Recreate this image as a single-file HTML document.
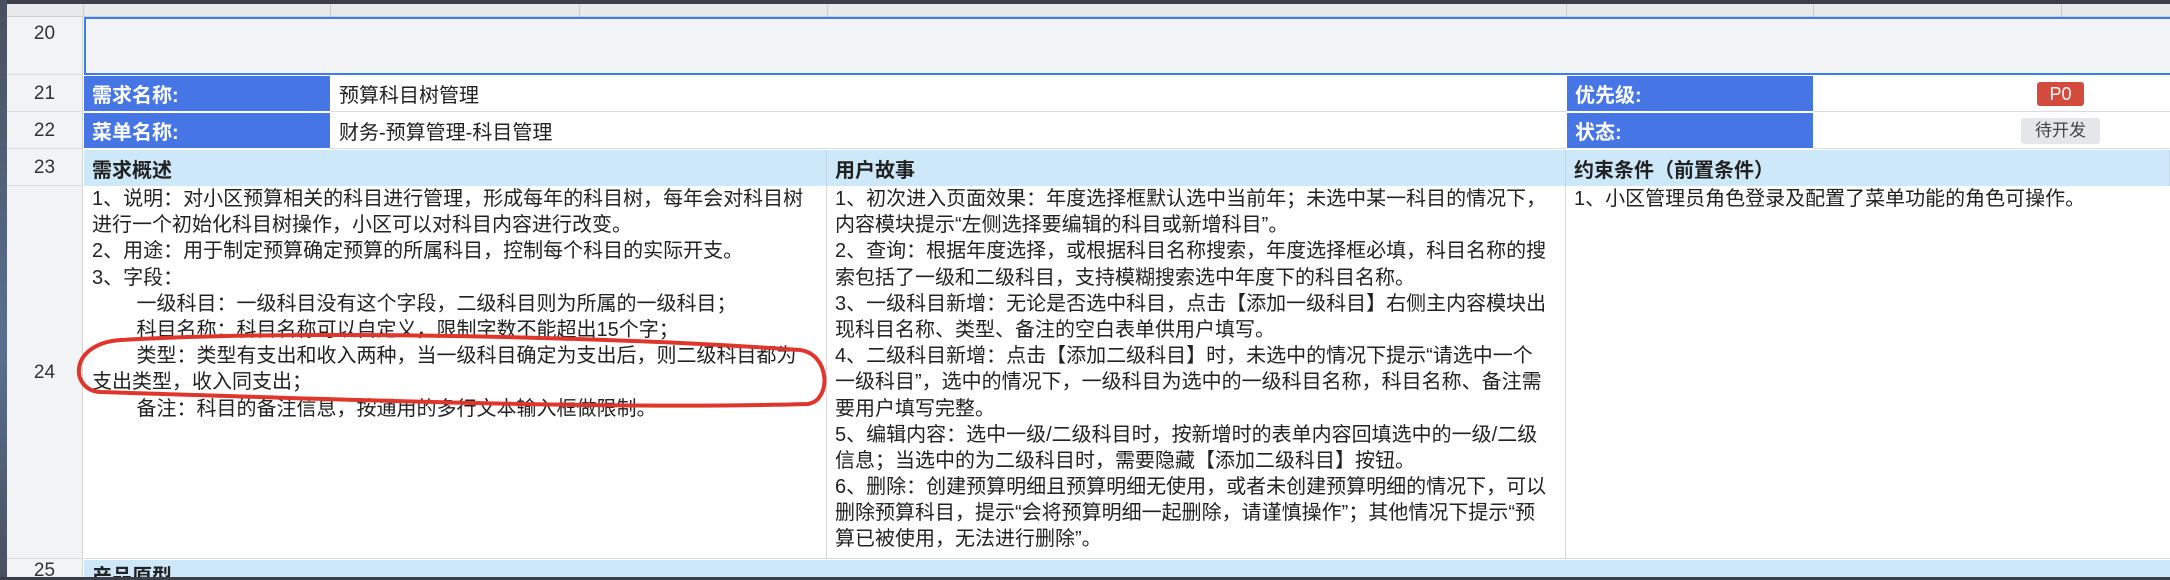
<!DOCTYPE html>
<html><head><meta charset="utf-8"><style>
*{margin:0;padding:0;box-sizing:border-box}
body{width:2170px;height:580px;overflow:hidden;background:#fff;position:relative;font-family:"Liberation Sans","Noto Sans CJK SC",sans-serif;color:#222}
.a{position:absolute}
.rh{position:absolute;left:7px;width:76px;background:#f2f3f5;color:#333;font-size:19px;text-align:center;border-bottom:1px solid #dcdcdc;border-right:1px solid #d4d4d4}
.lab{background:#4676e6;color:#fff;font-weight:bold;font-size:20px;padding-left:8px;display:flex;align-items:center}
.val{font-size:20px;display:flex;align-items:center;padding-left:9px;border-bottom:1px solid #dcdcdc}
.hd{background:#cde8f9;font-weight:bold;font-size:20px;padding-left:8px;display:flex;align-items:center;border-right:1px solid #c6d8e6}
.txt{font-size:20px;line-height:26.2px;padding:0 8px;border-right:1px solid #d8d8d8;white-space:pre;overflow:hidden}
.txt div{height:26.2px}
</style></head><body>
<div class="a" style="left:0;top:0;width:2170px;height:4px;background:#3a3f4a"></div>
<div class="a" style="left:0;top:0;width:7px;height:580px;background:linear-gradient(#4a5060,#5a6f90 60%,#4a5060)"></div>
<div class="a" style="left:7px;top:4px;width:2163px;height:13px;background:#e8e9eb;border-bottom:1px solid #d0d0d0"></div>
<div class="a" style="left:83px;top:4px;width:1px;height:13px;background:#ccc"></div>
<div class="a" style="left:330px;top:4px;width:1px;height:13px;background:#ccc"></div>
<div class="a" style="left:579px;top:4px;width:1px;height:13px;background:#ccc"></div>
<div class="a" style="left:827px;top:4px;width:1px;height:13px;background:#ccc"></div>
<div class="a" style="left:1566px;top:4px;width:1px;height:13px;background:#ccc"></div>
<div class="a" style="left:1813px;top:4px;width:1px;height:13px;background:#ccc"></div>
<div class="a" style="left:2061px;top:4px;width:1px;height:13px;background:#ccc"></div>
<div class="rh" style="top:17px;height:58px;padding-top:6px">20</div>
<div class="rh" style="top:75px;height:37px;line-height:37px">21</div>
<div class="rh" style="top:112px;height:37px;line-height:37px">22</div>
<div class="rh" style="top:149px;height:37px;line-height:37px">23</div>
<div class="rh" style="top:186px;height:373px;line-height:373px">24</div>
<div class="rh" style="top:559px;height:21px;line-height:24px;overflow:hidden">25</div>
<div class="a" style="left:84px;top:17px;width:2086px;height:58px;background:#f3f4f6;border:2px solid #3d7bf0;border-right:none"></div>
<div class="a lab" style="left:84px;top:76px;width:246px;height:35px">需求名称:</div>
<div class="a val" style="left:330px;top:76px;width:1236px;height:36px">预算科目树管理</div>
<div class="a lab" style="left:1567px;top:76px;width:246px;height:35px">优先级:</div>
<div class="a val" style="left:1813px;top:76px;width:357px;height:36px"></div>
<div class="a" style="left:2037px;top:82px;width:47px;height:24px;background:#d24b3d;color:#fff;font-size:18px;text-align:center;line-height:24px;border-radius:3px">P0</div>
<div class="a lab" style="left:84px;top:113px;width:246px;height:35px">菜单名称:</div>
<div class="a val" style="left:330px;top:113px;width:1236px;height:36px">财务-预算管理-科目管理</div>
<div class="a lab" style="left:1567px;top:113px;width:246px;height:35px">状态:</div>
<div class="a val" style="left:1813px;top:113px;width:357px;height:36px"></div>
<div class="a" style="left:2021px;top:118px;width:79px;height:26px;background:#e4e6ea;color:#444;font-size:17px;text-align:center;line-height:26px;border-radius:3px">待开发</div>
<div class="a hd" style="left:84px;top:150px;width:743px;height:36px">需求概述</div>
<div class="a hd" style="left:827px;top:150px;width:739px;height:36px">用户故事</div>
<div class="a hd" style="left:1566px;top:150px;width:604px;height:36px">约束条件（前置条件）</div>
<div class="a txt" style="left:84px;top:186px;width:743px;height:373px"><div>1、说明：对小区预算相关的科目进行管理，形成每年的科目树，每年会对科目树</div><div>进行一个初始化科目树操作，小区可以对科目内容进行改变。</div><div>2、用途：用于制定预算确定预算的所属科目，控制每个科目的实际开支。</div><div>3、字段：</div><div>        一级科目：一级科目没有这个字段，二级科目则为所属的一级科目；</div><div>        科目名称：科目名称可以自定义，限制字数不能超出15个字；</div><div>        类型：类型有支出和收入两种，当一级科目确定为支出后，则二级科目都为</div><div>支出类型，收入同支出；</div><div>        备注：科目的备注信息，按通用的多行文本输入框做限制。</div></div>
<div class="a txt" style="left:827px;top:186px;width:739px;height:373px"><div>1、初次进入页面效果：年度选择框默认选中当前年；未选中某一科目的情况下，</div><div>内容模块提示“左侧选择要编辑的科目或新增科目”。</div><div>2、查询：根据年度选择，或根据科目名称搜索，年度选择框必填，科目名称的搜</div><div>索包括了一级和二级科目，支持模糊搜索选中年度下的科目名称。</div><div>3、一级科目新增：无论是否选中科目，点击【添加一级科目】右侧主内容模块出</div><div>现科目名称、类型、备注的空白表单供用户填写。</div><div>4、二级科目新增：点击【添加二级科目】时，未选中的情况下提示“请选中一个</div><div>一级科目”，选中的情况下，一级科目为选中的一级科目名称，科目名称、备注需</div><div>要用户填写完整。</div><div>5、编辑内容：选中一级/二级科目时，按新增时的表单内容回填选中的一级/二级</div><div>信息；当选中的为二级科目时，需要隐藏【添加二级科目】按钮。</div><div>6、删除：创建预算明细且预算明细无使用，或者未创建预算明细的情况下，可以</div><div>删除预算科目，提示“会将预算明细一起删除，请谨慎操作”；其他情况下提示“预</div><div>算已被使用，无法进行删除”。</div></div>
<div class="a txt" style="left:1566px;top:186px;width:604px;height:373px;border-right:none"><div>1、小区管理员角色登录及配置了菜单功能的角色可操作。</div></div>
<div class="a" style="left:84px;top:558px;width:2086px;height:1px;background:#d8d8d8"></div>
<div class="a" style="left:84px;top:560px;width:2086px;height:17px;background:#cde8f9;overflow:hidden"><div style="font-weight:bold;font-size:20px;padding-left:8px;line-height:34px">产品原型</div></div>
<div class="a" style="left:0;top:577px;width:2170px;height:3px;background:#3a3f4a"></div>
<svg class="a" style="left:0;top:0" width="2170" height="580"><path d="M120 340 C 300 330, 600 336, 800 350 C 830 354, 832 400, 808 404 C 600 410, 300 398, 100 392 C 70 390, 68 344, 120 340 Z" fill="none" stroke="#e0352b" stroke-width="4"/></svg>
</body></html>
